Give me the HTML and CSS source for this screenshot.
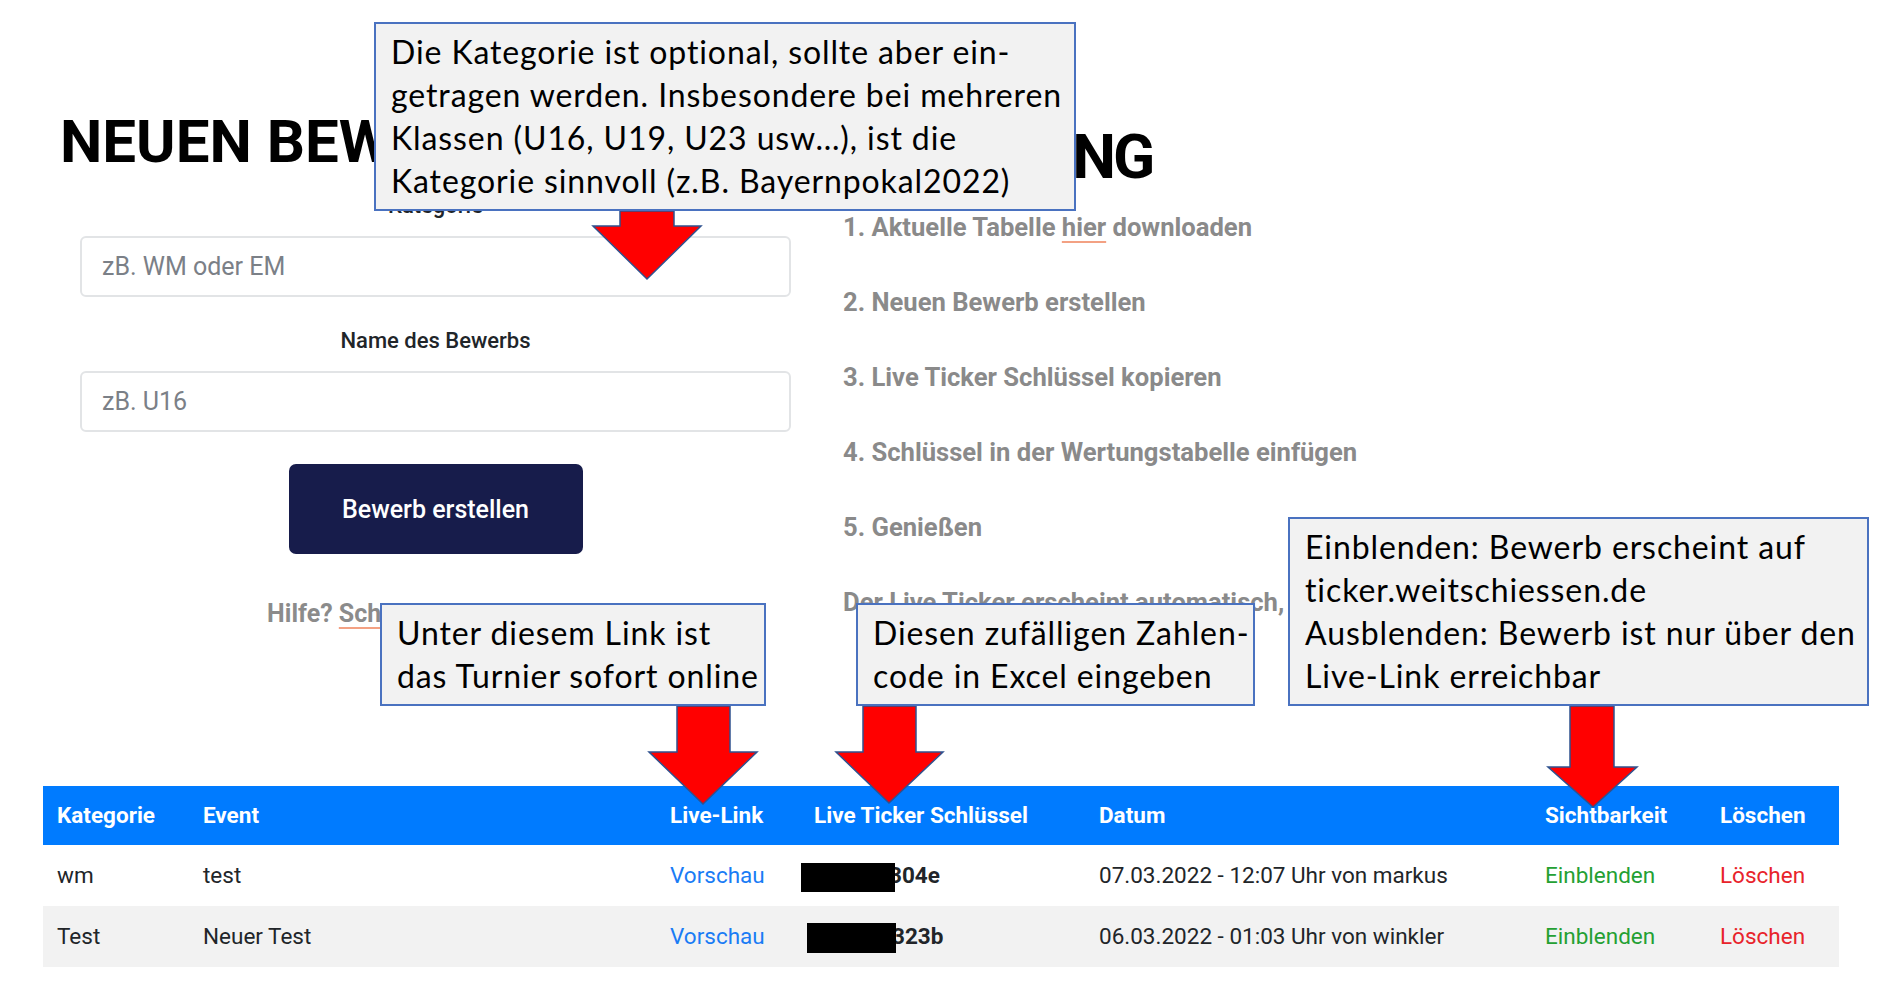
FILE: index.html
```html
<!DOCTYPE html>
<html lang="de">
<head>
    <meta charset="UTF-8">
    <meta name="viewport" content="width=device-width, initial-scale=1.0">
    <title>Live Ticker - Bewerbe</title>
    <link rel="stylesheet" href="styles.css">
</head>
<body>

    <div class="page">
        <div class="top">
            <section class="create">
                <h1 class="title">NEUEN BEWERB</h1>
                <form class="form">
                    <label class="field">
                        <span class="field-label">Kategorie</span>
                        <input type="text" placeholder="zB. WM oder EM">
                    </label>
                    <label class="field field-name">
                        <span class="field-label">Name des Bewerbs</span>
                        <input type="text" placeholder="zB. U16">
                    </label>
                    <button type="button" class="btn">Bewerb erstellen</button>
                    <p class="help">Hilfe? <a href="#">Schreib uns eine E-Mail</a></p>
                </form>
            </section>

            <section class="guide">
                <h2 class="title guide-title">ANLEITUNG</h2>
                <ol class="steps">
                    <li>1. Aktuelle Tabelle <a href="#">hier</a> downloaden</li>
                    <li>2. Neuen Bewerb erstellen</li>
                    <li>3. Live Ticker Schlüssel kopieren</li>
                    <li>4. Schlüssel in der Wertungstabelle einfügen</li>
                    <li>5. Genießen</li>
                    <li>Der Live Ticker erscheint automatisch, sobald Ergebnisse da sind.</li>
                </ol>
            </section>
        </div>

        <table class="events">
            <colgroup>
                <col class="c-cat">
                <col class="c-event">
                <col class="c-link">
                <col class="c-key">
                <col class="c-date">
                <col class="c-vis">
                <col class="c-del">
            </colgroup>
            <thead>
                <tr>
                    <th>Kategorie</th>
                    <th>Event</th>
                    <th>Live-Link</th>
                    <th>Live Ticker Schlüssel</th>
                    <th>Datum</th>
                    <th>Sichtbarkeit</th>
                    <th>Löschen</th>
                </tr>
            </thead>
            <tbody>
                <tr>
                    <td>wm</td>
                    <td>test</td>
                    <td><a class="link" href="#">Vorschau</a></td>
                    <td class="key"><span class="redact"></span><b>304e</b></td>
                    <td>07.03.2022 - 12:07 Uhr von markus</td>
                    <td><a class="show" href="#">Einblenden</a></td>
                    <td><a class="delete" href="#">Löschen</a></td>
                </tr>
                <tr class="alt">
                    <td>Test</td>
                    <td>Neuer Test</td>
                    <td><a class="link" href="#">Vorschau</a></td>
                    <td class="key"><span class="redact"></span><b>323b</b></td>
                    <td>06.03.2022 - 01:03 Uhr von winkler</td>
                    <td><a class="show" href="#">Einblenden</a></td>
                    <td><a class="delete" href="#">Löschen</a></td>
                </tr>
            </tbody>
        </table>
    </div>

    <!-- annotations drawn over the page -->
    <svg class="arrow arrow-cat" width="115" height="78" viewBox="0 0 115 78">
        <polygon points="30,6 84,6 84,21 111,21 57,74 3,21 30,21"/>
    </svg>
    <svg class="arrow arrow-link" width="116" height="108" viewBox="0 0 116 108">
        <polygon points="32,6 85,6 85,52 112,52 58,104 4,52 32,52"/>
    </svg>
    <svg class="arrow arrow-key" width="115" height="107" viewBox="0 0 115 107">
        <polygon points="31,6 84,6 84,52 111,52 57,103 4,52 31,52"/>
    </svg>
    <svg class="arrow arrow-vis" width="97" height="111" viewBox="0 0 97 111">
        <polygon points="26,6 70,6 70,67 93,67 49,107 4,67 26,67"/>
    </svg>

    <p class="note note-cat">Die Kategorie ist optional, sollte aber ein-<br>getragen werden. Insbesondere bei mehreren<br>Klassen (U16, U19, U23 usw…), ist die<br>Kategorie sinnvoll (z.B. Bayernpokal2022)</p>
    <p class="note note-link">Unter diesem Link ist<br>das Turnier sofort online</p>
    <p class="note note-key">Diesen zufälligen Zahlen-<br>code in Excel eingeben</p>
    <p class="note note-vis">Einblenden: Bewerb erscheint auf<br>ticker.weitschiessen.de<br>Ausblenden: Bewerb ist nur über den<br>Live-Link erreichbar</p>

</body>
</html>
```

FILE: styles.css
```css
body {
    margin: 0;
    font-family: Roboto, 'Liberation Sans', sans-serif;
    color: #212529;
    background-color: #ffffff;
    position: relative;
}
a {
    text-decoration: none;
}
.page {
    padding: 0 49px 0 43px;
}
.top {
    display: grid;
    grid-template-columns: 800px 1fr;
}
.title {
    margin: 0;
    font-weight: 700;
    line-height: 1;
    color: #000;
    white-space: nowrap;
}

/* left column: create form */
.create {
    padding-top: 112px;
}
.create .title {
    font-size: 60px;
    margin-left: 17px;
}
.form {
    display: flex;
    flex-direction: column;
    margin-top: 17px;
    padding: 0 52px 0 37px;
}
.field {
    display: flex;
    flex-direction: column;
    gap: 14px;
}
.field-name {
    margin-top: 27px;
}
.field-label {
    text-align: center;
    font-size: 22px;
    font-weight: 500;
    line-height: 33px;
    color: #212529;
}
.field input {
    box-sizing: border-box;
    width: 100%;
    height: 61px;
    padding: 0 20px;
    font-family: Roboto, 'Liberation Sans', sans-serif;
    font-size: 25px;
    border: 2px solid #e2e4e6;
    border-radius: 6px;
    outline: none;
}
.field input::placeholder {
    color: #7b8087;
}
.btn {
    align-self: center;
    width: 294px;
    height: 90px;
    margin-top: 32px;
    border: none;
    border-radius: 7px;
    background-color: #171c4b;
    color: #ffffff;
    font-family: Roboto, 'Liberation Sans', sans-serif;
    font-size: 25px;
    font-weight: 500;
}
.help {
    margin: 42px 0 0;
    text-align: center;
    font-size: 25px;
    font-weight: 700;
    line-height: 36px;
    color: #8b8b8b;
    white-space: nowrap;
}
.help a, .steps a {
    color: inherit;
    text-decoration: underline;
    text-decoration-color: #f3a183;
    text-decoration-thickness: 2px;
    text-underline-offset: 5px;
}

/* right column: guide */
.guide {
    padding-top: 126px;
}
.guide-title {
    font-size: 62px;
    letter-spacing: -3px;
}
.steps {
    display: flex;
    flex-direction: column;
    gap: 39px;
    list-style: none;
    margin: 21px 0 0;
    padding: 0;
}
.steps li {
    font-size: 25.6px;
    font-weight: 700;
    line-height: 36px;
    color: #8a8a8a;
    white-space: nowrap;
}

/* events table */
.events {
    width: 100%;
    margin-top: 154px;
    border-collapse: collapse;
    table-layout: fixed;
    font-size: 22.5px;
}
.c-cat { width: 146px; }
.c-event { width: 467px; }
.c-link { width: 144px; }
.c-key { width: 285px; }
.c-date { width: 446px; }
.c-vis { width: 175px; }
.c-del { width: 133px; }
.events th, .events td {
    padding: 13px 14px;
    line-height: 33px;
    text-align: left;
    white-space: nowrap;
}
.events th {
    background-color: #007bff;
    color: #ffffff;
    font-weight: 700;
}
.events td {
    padding: 14px 14px;
}
.events tr.alt td {
    background-color: #f2f2f2;
}
.link {
    color: #1a7cf5;
}
.show {
    color: #24a033;
}
.delete {
    color: #e8232b;
}
.redact {
    display: inline-block;
    position: relative;
    z-index: 1;
    width: 94px;
    height: 29px;
    margin-left: -13px;
    background-color: #000;
    vertical-align: middle;
}
.key b {
    margin-left: -6px;
}
.alt .redact {
    width: 89px;
    height: 30px;
    margin-left: -7px;
}
.alt .key b {
    margin-left: -4px;
}

/* annotations */
.arrow {
    position: absolute;
}
.arrow polygon {
    fill: #ff0000;
    stroke: #2f528f;
    stroke-width: 1.5;
    stroke-linejoin: miter;
}
.arrow-cat { left: 590px; top: 205px; }
.arrow-link { left: 645px; top: 700px; }
.arrow-key { left: 832px; top: 700px; }
.arrow-vis { left: 1544px; top: 700px; }

.note {
    position: absolute;
    box-sizing: border-box;
    margin: 0;
    padding: 6px 15px 0;
    background-color: #f2f2f2;
    border: 2px solid #4a72c0;
    font-family: Lato, 'Open Sans', sans-serif;
    font-size: 32px;
    letter-spacing: 0.9px;
    line-height: 43px;
    color: #000;
    white-space: nowrap;
}
.note-cat { left: 374px; top: 22px; width: 702px; height: 189px; }
.note-link { left: 380px; top: 603px; width: 386px; height: 103px; }
.note-key { left: 856px; top: 603px; width: 399px; height: 103px; }
.note-vis { left: 1288px; top: 517px; width: 581px; height: 189px; }
```
